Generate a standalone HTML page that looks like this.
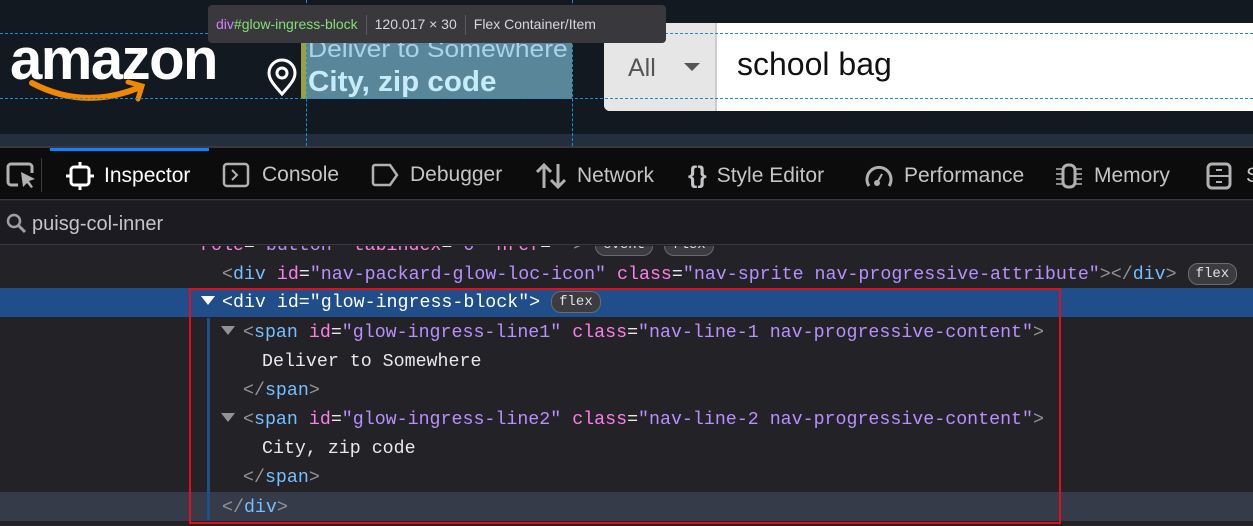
<!DOCTYPE html>
<html><head><meta charset="utf-8"><style>
*{margin:0;padding:0;box-sizing:border-box}
body{width:1253px;height:526px;overflow:hidden;background:#232327;font-family:"Liberation Sans",sans-serif;position:relative}
.abs{position:absolute}
.mono{font-family:"Liberation Mono",monospace;font-size:18.3px;white-space:pre;color:#e8e8ea}
.t{color:#75bfff}.a{color:#ff7de9}.v{color:#b98eff}.p{color:#939395}
.badge{display:inline-block;border:1px solid #6b6b70;border-radius:10px;background:#3b3b40;color:#e0e0e2;font-size:14px;padding:0 7px;line-height:20px;vertical-align:2px;font-family:"Liberation Mono",monospace}
.tab{position:absolute;top:162px;font-size:21px;color:#c5c5c8;display:flex;align-items:center}
.tab svg{margin-right:10px}
.line{position:absolute;left:0;width:1253px;height:29px;line-height:29px}
.tri{display:inline-block;width:0;height:0;border-left:7px solid transparent;border-right:7px solid transparent;border-top:9px solid #939395;vertical-align:2px;margin-right:8px}
</style></head><body>
<div class="abs" style="left:0;top:0;width:1253px;height:134px;background:#131921"></div>
<div class="abs" style="left:0;top:134px;width:1253px;height:12px;background:#232f3e"></div>
<div class="abs" style="left:0;top:146px;width:1253px;height:2px;background:#38383d"></div>
<div class="abs" style="left:10px;top:28px;font-size:58px;font-weight:bold;color:#fff;letter-spacing:-1.5px;line-height:64px">amazon</div>
<svg class="abs" style="left:28px;top:78px" width="130" height="36"><path d="M4 5 Q55 32 110 10" stroke="#f08804" stroke-width="6" fill="none" stroke-linecap="round"/><path d="M100 4 L114 8 L110 21" stroke="#f08804" stroke-width="5" fill="none" stroke-linecap="round"/></svg>
<svg class="abs" style="left:265px;top:58px" width="34" height="40"><path d="M17 36 C10 28 4 22 4 15 A13 13 0 0 1 30 15 C30 22 24 28 17 36Z" fill="none" stroke="#fff" stroke-width="3"/><circle cx="17" cy="15" r="5" fill="none" stroke="#fff" stroke-width="3"/></svg>
<div class="abs" style="left:301px;top:39px;width:6px;height:60px;background:#9a9f4a"></div>
<div class="abs" style="left:307px;top:39px;width:265px;height:60px;background:#5a8699"></div>
<div class="abs" style="left:308px;top:36px;font-size:24px;color:#a9d4e8;line-height:28px;white-space:nowrap;transform:scaleX(1.1);transform-origin:left">Deliver to Somewhere</div>
<div class="abs" style="left:308px;top:66px;font-size:29px;font-weight:bold;color:#c6ecfa;line-height:32px;white-space:nowrap;transform:scaleX(1.02);transform-origin:left">City, zip code</div>
<div class="abs" style="left:604px;top:23px;width:660px;height:88px;background:#fff;border-radius:6px 0 0 6px"></div>
<div class="abs" style="left:604px;top:23px;width:113px;height:88px;background:#e6e6e6;border-radius:6px 0 0 6px;border-right:2px solid #cdcdcd"></div>
<div class="abs" style="left:628px;top:54px;font-size:25px;color:#555">All</div>
<div class="abs" style="left:684px;top:63px;width:0;height:0;border-left:8px solid transparent;border-right:8px solid transparent;border-top:8px solid #555"></div>
<div class="abs" style="left:737px;top:46px;font-size:32px;color:#111">school bag</div>
<div class="abs" style="left:0;top:33px;width:1253px;border-top:1px dashed #1a8fd0"></div>
<div class="abs" style="left:0;top:98px;width:1253px;border-top:1px dashed #1a8fd0"></div>
<div class="abs" style="left:306px;top:0;height:146px;border-left:1px dashed #1a8fd0"></div>
<div class="abs" style="left:572px;top:0;height:146px;border-left:1px dashed #1a8fd0"></div>
<div class="abs" style="left:208px;top:5px;width:458px;height:38px;background:#38383d;border-radius:4px;font-size:14px;line-height:38px;color:#d7d7db;padding-left:8px;white-space:nowrap"><span style="color:#d77aff">div</span><span style="color:#86de74">#glow-ingress-block</span><span style="display:inline-block;width:1px;height:20px;background:#5a5a60;vertical-align:middle;margin:0 8px"></span>120.017 × 30<span style="display:inline-block;width:1px;height:20px;background:#5a5a60;vertical-align:middle;margin:0 8px"></span>Flex Container/Item</div>
<div class="abs" style="left:0;top:148px;width:1253px;height:52px;background:#0c0c0d;border-bottom:1px solid #38383d"></div>
<div class="abs" style="left:50px;top:148px;width:159px;height:3px;background:#0a84ff"></div>
<div class="abs" style="left:41px;top:158px;width:1px;height:34px;background:#38383d"></div>
<svg class="abs" style="left:6px;top:162px" width="32" height="28"><path d="M12 23 H5 a3 3 0 0 1 -3 -3 V5 a3 3 0 0 1 3 -3 h18 a3 3 0 0 1 3 3 v6" stroke="#b1b1b3" stroke-width="3" fill="none"/><path d="M15 10 L29 17 L23 19 L27 25 L25 26 L21 21 L17 25Z" fill="#b1b1b3"/></svg>
<div class="tab" style="left:66px;color:#fff"><svg width="28" height="28"><rect x="5" y="5" width="18" height="18" rx="3" fill="none" stroke="#fff" stroke-width="3"/><path d="M14 0v5M14 23v5M0 14h5M23 14h5" stroke="#fff" stroke-width="3"/></svg>Inspector</div>
<div class="tab" style="left:222px"><svg width="30" height="26"><rect x="2" y="2" width="24" height="22" rx="3" fill="none" stroke="#b1b1b3" stroke-width="2.5"/><path d="M10 8l5 5-5 5" stroke="#b1b1b3" stroke-width="2" fill="none"/></svg>Console</div>
<div class="tab" style="left:370px"><svg width="30" height="26"><path d="M3 5a2 2 0 0 1 2-2h15l7 10-7 10H5a2 2 0 0 1-2-2z" fill="none" stroke="#b1b1b3" stroke-width="2.5"/></svg>Debugger</div>
<div class="tab" style="left:535px"><svg width="32" height="28"><path d="M9 26V3M2 10l7-7 7 7M23 2v23M16 18l7 7 7-7" stroke="#b1b1b3" stroke-width="3" fill="none"/></svg>Network</div>
<div class="tab" style="left:688px"><span style="font-weight:bold;font-size:24px;margin-right:10px">{}</span>Style Editor</div>
<div class="tab" style="left:864px"><svg width="30" height="28"><path d="M5 24A12 12 0 1 1 25 24" stroke="#b1b1b3" stroke-width="3" fill="none"/><circle cx="13" cy="21" r="3" fill="#b1b1b3"/><path d="M13 21l5-9" stroke="#b1b1b3" stroke-width="2"/></svg>Performance</div>
<div class="tab" style="left:1054px"><svg width="30" height="28"><rect x="9" y="3" width="12" height="22" rx="5" fill="none" stroke="#b1b1b3" stroke-width="3"/><path d="M2 7h6M2 12h6M2 17h6M2 22h6M22 7h6M22 12h6M22 17h6M22 22h6" stroke="#b1b1b3" stroke-width="1.5"/></svg>Memory</div>
<div class="tab" style="left:1206px"><svg width="30" height="28"><rect x="2" y="2" width="22" height="24" rx="4" fill="none" stroke="#b1b1b3" stroke-width="3"/><path d="M2 14h22M10 8h6M10 20h6" stroke="#b1b1b3" stroke-width="2"/></svg>S</div>
<div class="abs" style="left:0;top:201px;width:1253px;height:44px;background:#1c1b22;border-bottom:1px solid #38383d"></div>
<svg class="abs" style="left:6px;top:213px" width="22" height="22"><circle cx="8" cy="8" r="6" stroke="#9f9fa3" stroke-width="2.5" fill="none"/><path d="M12 12l7 7" stroke="#9f9fa3" stroke-width="3"/></svg>
<div class="abs" style="left:32px;top:213px;font-size:20px;color:#c5c5c8">puisg-col-inner</div>
<div class="abs" style="left:0;top:246px;width:1253px;height:280px;overflow:hidden">
 <div class="line mono" style="top:-14px;left:200px"><span class="a">role</span>=<span class="v">"button"</span> <span class="a">tabindex</span>=<span class="v">"0"</span> <span class="a">href</span>=<span class="v">""</span><span class="p">&gt;</span> <span class="badge">event</span> <span class="badge">flex</span></div>
 <div class="line mono" style="top:15px;padding-left:222px"><span class="p">&lt;</span><span class="t">div</span> <span class="a">id</span>=<span class="v">"nav-packard-glow-loc-icon"</span> <span class="a">class</span>=<span class="v">"nav-sprite nav-progressive-attribute"</span><span class="p">&gt;&lt;/</span><span class="t">div</span><span class="p">&gt;</span> <span class="badge">flex</span></div>
 <div class="line" style="top:42px;background:#204e8a"></div>
 <div class="line mono" style="top:43px;padding-left:201px;color:#fff"><span class="tri" style="border-top-color:#fff;margin-right:7px"></span>&lt;div id="glow-ingress-block"&gt; <span class="badge">flex</span></div>
 <div class="abs" style="left:207px;top:72px;width:3px;height:202px;background:#204e8a"></div>
 <div class="line mono" style="top:73px;padding-left:221px"><span class="tri"></span><span class="p">&lt;</span><span class="t">span</span> <span class="a">id</span>=<span class="v">"glow-ingress-line1"</span> <span class="a">class</span>=<span class="v">"nav-line-1 nav-progressive-content"</span><span class="p">&gt;</span></div>
 <div class="line mono" style="top:102px;padding-left:262px">Deliver to Somewhere</div>
 <div class="line mono" style="top:131px;padding-left:243px"><span class="p">&lt;/</span><span class="t">span</span><span class="p">&gt;</span></div>
 <div class="line mono" style="top:160px;padding-left:221px"><span class="tri"></span><span class="p">&lt;</span><span class="t">span</span> <span class="a">id</span>=<span class="v">"glow-ingress-line2"</span> <span class="a">class</span>=<span class="v">"nav-line-2 nav-progressive-content"</span><span class="p">&gt;</span></div>
 <div class="line mono" style="top:189px;padding-left:262px">City, zip code</div>
 <div class="line mono" style="top:218px;padding-left:243px"><span class="p">&lt;/</span><span class="t">span</span><span class="p">&gt;</span></div>
 <div class="line" style="top:246px;background:#353b48"></div>
 <div class="abs" style="left:207px;top:246px;width:3px;height:28px;background:#204e8a"></div>
 <div class="line mono" style="top:248px;padding-left:222px"><span class="p">&lt;/</span><span class="t">div</span><span class="p">&gt;</span></div>
</div>
<div class="abs" style="left:189px;top:288px;width:872px;height:236px;border:2px solid #e0101a"></div>
</body></html>
